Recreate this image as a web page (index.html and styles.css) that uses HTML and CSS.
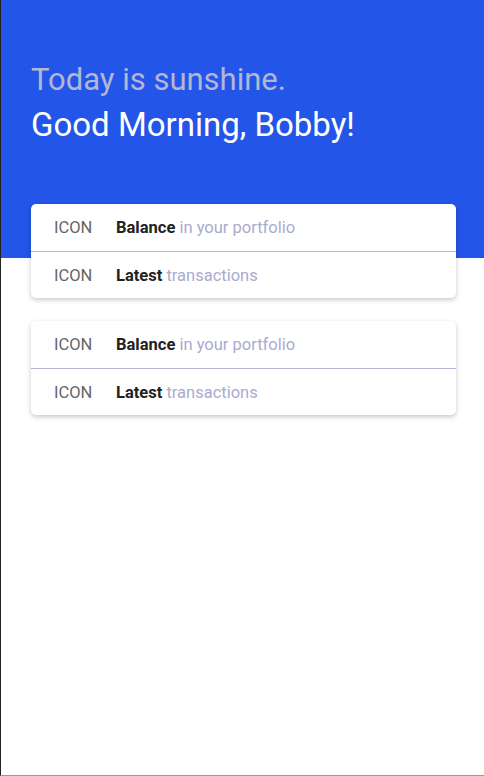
FILE: index.html
```html
<!DOCTYPE html>
<html lang="en">
<head>
    <meta charset="UTF-8">
    <meta name="viewport" content="width=device-width, initial-scale=1.0">
    <title>Home</title>
    <link rel="stylesheet" href="styles.css">
</head>
<body>
    <div class="app">
        <div class="header">
            <div class="subtitle">Today is sunshine.</div>
            <div class="title">Good Morning, Bobby!</div>
        </div>
        <div class="cards">
            <div class="card">
                <div class="card-row">
                    <span class="icon">ICON</span>
                    <span class="label"><b>Balance</b> in your portfolio</span>
                </div>
                <div class="card-row">
                    <span class="icon">ICON</span>
                    <span class="label"><b>Latest</b> transactions</span>
                </div>
            </div>
            <div class="card">
                <div class="card-row">
                    <span class="icon">ICON</span>
                    <span class="label"><b>Balance</b> in your portfolio</span>
                </div>
                <div class="card-row">
                    <span class="icon">ICON</span>
                    <span class="label"><b>Latest</b> transactions</span>
                </div>
            </div>
        </div>
    </div>
</body>
</html>
```

FILE: styles.css
```css
* {
    box-sizing: border-box;
}
body {
    margin: 0;
    font-family: Roboto, "Liberation Sans", sans-serif;
    background: #fff;
}
.app {
    height: 776px;
    border-left: 1px solid #222;
    border-bottom: 1px solid #999;
}
.header {
    background: #2356e8;
    height: 258px;
    padding: 62px 30px 0;
}
.subtitle {
    font-size: 31px;
    line-height: 36px;
    color: #b3b6d4;
}
.title {
    font-size: 33px;
    line-height: 40px;
    color: #fff;
    margin-top: 7px;
}
.cards {
    margin-top: -54px;
    padding: 0 28px 0 30px;
    display: flex;
    flex-direction: column;
    gap: 23px;
}
.card {
    background: #fff;
    border-radius: 5px;
    box-shadow: 0 2px 5px rgba(0, 0, 0, 0.22);
}
.card-row {
    height: 47px;
    display: flex;
    align-items: center;
    padding-left: 23px;
    font-size: 16.5px;
}
.card-row + .card-row {
    border-top: 1px solid #b6b3d4;
}
.icon {
    width: 62px;
    color: #666;
}
.label {
    color: #a9abcf;
}
.label b {
    color: #222;
    font-weight: 700;
}
```
